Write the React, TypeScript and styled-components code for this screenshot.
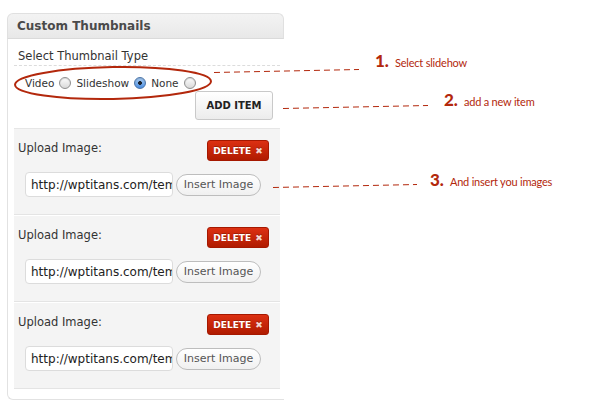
import React from "react";
import styled, { createGlobalStyle } from "styled-components";

const Global = createGlobalStyle`
  *, *::before, *::after { box-sizing: border-box; }
  html, body { margin: 0; padding: 0; background: #fff; }
  body { width: 600px; height: 405px; overflow: hidden; font-family: "DejaVu Sans", "Liberation Sans", sans-serif; }
`;

const Page = styled.div`
  position: relative;
  width: 600px;
  height: 405px;
  padding: 13px 0 0 7px;
`;

const Panel = styled.div`
  width: 277px;
  display: flex;
  flex-direction: column;
`;

const Header = styled.div`
  height: 26px;
  border: 1px solid #e0e0e0;
  border-bottom-color: #dadada;
  border-radius: 6px 6px 0 0;
  background: linear-gradient(#f3f3f3, #e8e8e8);
  display: flex;
  align-items: center;
  padding-left: 9px;
  font-size: 12px;
  font-weight: bold;
  color: #4a4a4a;
`;

const Body = styled.div`
  border-left: 1px solid #e2e2e2;
  border-bottom: 1px solid #e2e2e2;
  border-bottom-left-radius: 6px;
  padding: 9px 4px 9px 6px;
  display: flex;
  flex-direction: column;
`;

const TypeLabel = styled.div`
  font-size: 11.5px;
  line-height: 16px;
  color: #333;
  padding: 0 0 1px 4px;
  border-bottom: 1px dashed #dcdcdc;
`;

const RadioRow = styled.div`
  margin-top: 9px;
  height: 16px;
  display: flex;
  align-items: center;
  padding-left: 11px;
  font-size: 10.5px;
  color: #333;
`;

const RadioLabel = styled.span`
  margin-right: 5px;
`;

const Radio = styled.span<{ $checked?: boolean }>`
  width: 12px;
  height: 12px;
  border-radius: 50%;
  border: 1px solid ${(p) => (p.$checked ? "#4a74a8" : "#8f8f8f")};
  background: ${(p) =>
    p.$checked
      ? "radial-gradient(circle at 50% 50%, #1b2430 0 1.6px, transparent 2.2px), linear-gradient(#a9cdf3, #4b8de0)"
      : "linear-gradient(#fdfdfd, #d9d9d9)"};
  box-shadow: inset 0 1px 1px rgba(0,0,0,0.15);
  margin-right: 5px;
  flex: none;
`;

const AddRow = styled.div`
  display: flex;
  justify-content: flex-end;
  padding-right: 7px;
  margin-bottom: 8px;
`;

const AddButton = styled.button`
  width: 78px;
  height: 29px;
  border: 1px solid #c9c9c9;
  border-radius: 3px;
  background: linear-gradient(#ffffff, #ececec);
  font-family: "DejaVu Sans", sans-serif;
  font-weight: bold;
  font-size: 10px;
  color: #222;
  padding: 0;
`;

const Items = styled.div`
  border-top: 1px solid #e6e6e6;
  display: flex;
  flex-direction: column;
`;

const Item = styled.div`
  background: #f4f4f4;
  border-bottom: 1px solid #e4e4e4;
  margin-bottom: 1px;
  padding: 11px 11px 17px 4px;
  display: flex;
  flex-direction: column;
  gap: 11px;
`;

const ItemTop = styled.div`
  display: flex;
  justify-content: space-between;
  align-items: flex-start;
`;

const UploadLabel = styled.span`
  font-size: 11.5px;
  color: #333;
  line-height: 16px;
`;

const DeleteButton = styled.button`
  width: 62px;
  height: 21px;
  border: 1px solid #a51800;
  border-radius: 3px;
  background: linear-gradient(#dc3012, #b01b00);
  color: #fff;
  font-family: "DejaVu Sans", sans-serif;
  font-weight: bold;
  font-size: 9px;
  padding: 0;
  display: flex;
  align-items: center;
  justify-content: center;
  gap: 4px;
  text-shadow: 0 -1px 0 rgba(0,0,0,0.25);
`;

const Cross = styled.span`
  font-size: 9px;
  color: #f4d7d0;
`;

const ItemBottom = styled.div`
  display: flex;
  align-items: center;
  padding-left: 7px;
  gap: 3px;
`;

const UrlInput = styled.input`
  width: 148px;
  height: 25px;
  border: 1px solid #dcdcdc;
  border-radius: 4px;
  background: #fff;
  font-family: "DejaVu Sans", sans-serif;
  font-size: 12px;
  color: #222;
  padding: 0 0 0 5px;
  outline: none;
`;

const InsertButton = styled.button`
  width: 85px;
  height: 22px;
  border: 1px solid #bdbdbd;
  border-radius: 11px;
  background: linear-gradient(#ffffff, #f0f0f0);
  font-family: "DejaVu Sans", sans-serif;
  font-size: 11px;
  color: #555;
  padding: 0;
`;

const Overlay = styled.svg`
  position: absolute;
  left: 0;
  top: 0;
  pointer-events: none;
`;

const Note = styled.div<{ $x: number; $y: number }>`
  position: absolute;
  left: ${(p) => p.$x}px;
  top: ${(p) => p.$y}px;
  display: flex;
  align-items: baseline;
  gap: 6px;
  color: #b3280c;
  font-family: Lato, "Open Sans", sans-serif;
  white-space: nowrap;
`;

const NoteNum = styled.span`
  font-size: 17px;
  font-weight: 900;
`;

const NoteText = styled.span`
  font-size: 11px;
  letter-spacing: -0.2px;
`;

const items = [0, 1, 2];

export default function App() {
  return (
    <>
      <Global />
      <Page>
        <Panel>
          <Header>Custom Thumbnails</Header>
          <Body>
            <TypeLabel>Select Thumbnail Type</TypeLabel>
            <RadioRow>
              <RadioLabel>Video</RadioLabel>
              <Radio />
              <RadioLabel>Slideshow</RadioLabel>
              <Radio $checked />
              <RadioLabel>None</RadioLabel>
              <Radio />
            </RadioRow>
            <AddRow>
              <AddButton>ADD ITEM</AddButton>
            </AddRow>
            <Items>
              {items.map((i) => (
                <Item key={i}>
                  <ItemTop>
                    <UploadLabel>Upload Image:</UploadLabel>
                    <DeleteButton>
                      DELETE <Cross>✖</Cross>
                    </DeleteButton>
                  </ItemTop>
                  <ItemBottom>
                    <UrlInput defaultValue="http://wptitans.com/template.jpg" readOnly />
                    <InsertButton>Insert Image</InsertButton>
                  </ItemBottom>
                </Item>
              ))}
            </Items>
          </Body>
        </Panel>

        <Overlay width="600" height="405" viewBox="0 0 600 405">
          <ellipse cx="113" cy="83" rx="98" ry="16" fill="none" stroke="#b3280c" strokeWidth="2" transform="rotate(-1 113 83)" />
          <g stroke="#b3280c" strokeWidth="1" strokeDasharray="6 4" fill="none">
            <line x1="214" y1="72.5" x2="359" y2="69.5" />
            <line x1="283" y1="108.5" x2="428" y2="105.5" />
            <line x1="273" y1="187.5" x2="417" y2="184.5" />
          </g>
        </Overlay>
        <Note $x={375} $y={50}>
          <NoteNum>1.</NoteNum>
          <NoteText>Select slidehow</NoteText>
        </Note>
        <Note $x={444} $y={89}>
          <NoteNum>2.</NoteNum>
          <NoteText>add a new item</NoteText>
        </Note>
        <Note $x={430} $y={169}>
          <NoteNum>3.</NoteNum>
          <NoteText>And insert you images</NoteText>
        </Note>
      </Page>
    </>
  );
}
